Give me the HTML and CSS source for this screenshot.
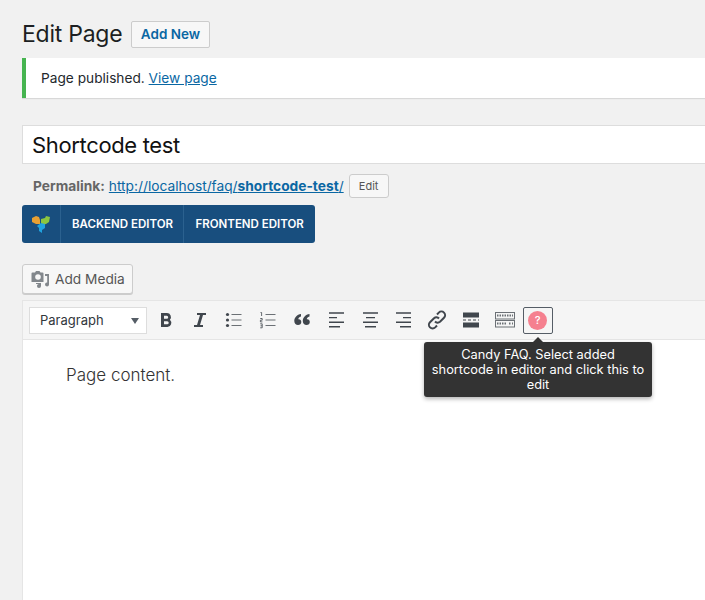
FILE: index.html
```html
<!DOCTYPE html>
<html>
<head>
	<title>Edit Page</title>
	<meta charset="utf-8">
	<link rel="stylesheet" href="styles.css">
</head>
<body>
<div class="wrap">
	<div class="heading">
		<h1>Edit Page</h1>
		<a href="#" class="add-new">Add New</a>
	</div>
	<div class="notice">Page published. <a href="#">View page</a></div>

	<div class="title-box">Shortcode test</div>
	<div class="permalink">
		<strong>Permalink:</strong>
		<a href="#">http://localhost/faq/<b>shortcode-test</b>/</a>
		<span class="btn-small">Edit</span>
	</div>

	<div class="composer">
		<span class="composer-logo">
			<svg width="18" height="19" viewBox="0 0 18 19">
				<path d="M0 3l4-2 3 1 1 3v4H4L0 7z" fill="#e8a032"/>
				<path d="M9 4l4-1 1-2 4 1-1 5-3 2-4 1-1-2z" fill="#8cc63f"/>
				<path d="M5 11l4-3 4 1v4l-3 2v3l-3-2v-3z" fill="#1fa3e0"/>
			</svg>
		</span>
		<span class="composer-btn">BACKEND EDITOR</span>
		<span class="composer-btn">FRONTEND EDITOR</span>
	</div>

	<div class="media-row">
		<a href="#" class="add-media">
			<svg width="18" height="17" viewBox="0 0 18 17">
				<path d="M1.500 1.500H4L5 0h3.500l1 1.500h2a1 1 0 0 1 1 1V11h-12V2.500a1 1 0 0 1 1-1z" fill="#82878c"/>
				<circle cx="7" cy="6" r="2.800" fill="#f7f7f7"/>
				<path d="M14 3h4v10.500a2 2 0 1 1-1.800-2V5H14z" fill="#82878c"/>
				<path d="M5 12h5v3a2 2 0 1 1-1.800-2H5z" fill="#82878c"/>
			</svg>
			Add Media
		</a>
	</div>

	<div class="editor">
		<div class="toolbar">
			<div class="format-select">Paragraph<span class="caret"></span></div>
			<span class="tool">
				<svg width="20" height="20" viewBox="0 0 20 20"><path d="M4 3h6a4 4 0 0 1 2.900 6.700A4.200 4.200 0 0 1 10.500 17H4zm3 2.800v3h2.700a1.500 1.500 0 0 0 0-3zm0 5.400v3h3.200a1.500 1.500 0 0 0 0-3z" fill="#40464d" fill-rule="evenodd"/></svg>
			</span>
			<span class="tool">
				<svg width="20" height="20" viewBox="0 0 20 20"><path d="M6 3h9v2h-3L9 15h3v2H3v-2h3L9 5H6z" fill="#40464d"/></svg>
			</span>
			<span class="tool">
				<svg width="20" height="20" viewBox="0 0 20 20"><g fill="#40464d"><circle cx="3.500" cy="4.500" r="1.600"/><circle cx="3.500" cy="10" r="1.600"/><circle cx="3.500" cy="15.500" r="1.600"/></g><path d="M7.500 4.500h10M7.500 10h10M7.500 15.500h10" stroke="#6b7075" stroke-width="1.100"/></svg>
			</span>
			<span class="tool">
				<svg width="20" height="20" viewBox="0 0 20 20"><path d="M2.500 2.500h1.100v3.500M2.200 8.500h2v1.700H2.400v1.700h2M2.200 13.800h2v4H2.200M2.500 15.800h1.700" stroke="#40464d" stroke-width=".8" fill="none"/><path d="M7.500 4.500h10M7.500 10h10M7.500 15.500h10" stroke="#6b7075" stroke-width="1.100"/></svg>
			</span>
			<span class="tool">
				<svg width="20" height="20" viewBox="0 0 20 20"><path d="M9 4v2.500C7 7 6.300 8.200 6.300 9.200c1.700-.3 3 .9 3 2.700S8 15 6 15s-3.700-1.400-3.700-4C2.300 7.500 5 4.500 9 4zm8.500 0v2.500c-2 .5-2.700 1.700-2.700 2.700 1.700-.3 3 .9 3 2.700S16.500 15 14.500 15s-3.700-1.400-3.700-4c0-3.500 2.700-6.500 6.700-7z" fill="#40464d"/></svg>
			</span>
			<span class="tool">
				<svg width="20" height="20" viewBox="0 0 20 20"><path d="M3 3h15M3 7.600h8M3 12.200h15M3 16.800h11" stroke="#40464d" stroke-width="1.400"/></svg>
			</span>
			<span class="tool">
				<svg width="20" height="20" viewBox="0 0 20 20"><path d="M3 3h15M6 7.600h9M3 12.200h15M5 16.800h11" stroke="#40464d" stroke-width="1.400"/></svg>
			</span>
			<span class="tool">
				<svg width="20" height="20" viewBox="0 0 20 20"><path d="M3 3h15M10 7.600h8M3 12.200h15M7 16.800h11" stroke="#40464d" stroke-width="1.400"/></svg>
			</span>
			<span class="tool">
				<svg width="20" height="20" viewBox="0 0 20 20"><g fill="none" stroke="#40464d" stroke-width="2"><path d="M8 11.500a3.600 3.600 0 0 0 5 .3l4-4a3.600 3.600 0 0 0-5.200-5.200L10 4.500"/><path d="M12 8.500a3.600 3.600 0 0 0-5-.3l-4 4a3.600 3.600 0 0 0 5.200 5.200L10 15.500"/></g></svg>
			</span>
			<span class="tool">
				<svg width="20" height="20" viewBox="0 0 20 20"><path d="M2 2.500h16v5H2zM2 12.500h16v5H2z" fill="#40464d"/><path d="M2 10h3M7 10h3M12 10h3M17 10h1" stroke="#40464d" stroke-width="1.200"/></svg>
			</span>
			<span class="tool">
				<svg width="20" height="20" viewBox="0 0 20 20"><g fill="none" stroke="#6b7075"><rect x=".5" y="2.500" width="19" height="6.500"/><rect x=".5" y="10.500" width="19" height="6.500"/><path d="M2 5.500h16" stroke-dasharray="1.500 1" stroke-width="2"/><path d="M2 13.500h10M14 13.500h2M17 13.500h1" stroke-dasharray="1.500 1" stroke-width="2"/></g></svg>
			</span>
			<span class="tool tool-active"><span class="faq-icon">?</span></span>
		</div>
		<div class="content">Page content.</div>
		<div class="tooltip">Candy FAQ. Select added shortcode in editor and click this to edit</div>
	</div>
</div>
</body>
</html>
```

FILE: styles.css
```css
html, body {
  margin: 0;
  height: 600px;
  overflow: hidden;
}

body {
  background: #f1f1f1;
  color: #23282d;
  font-family: "Inter", "Liberation Sans", sans-serif;
  font-size: 13px;
}

a {
  color: #0073aa;
}

.wrap {
  width: 683px;
  margin-left: 22px;
  padding-top: 19px;
  overflow: hidden;
}

.heading {
  display: flex;
  align-items: center;
  gap: 9px;
  height: 30px;
}

h1 {
  margin: 0;
  font-size: 23px;
  font-weight: 400;
  letter-spacing: -0.25px;
  color: #1c1f22;
}

.add-new {
  padding: 0 8.500px;
  height: 25px;
  line-height: 25px;
  border: 1px solid #ccc;
  border-radius: 2px;
  background: #f7f7f7;
  color: #0a67a3;
  font-size: 13.500px;
  font-weight: 600;
  text-decoration: none;
}

.notice {
  margin-top: 9px;
  height: 40px;
  line-height: 41px;
  padding-left: 15px;
  background: #fff;
  border-left: 4px solid #46b450;
  box-shadow: 0 1px 1px rgba(0, 0, 0, .1);
  font-size: 13.700px;
}

.notice a {
  color: #0a67a3;
}

.title-box {
  margin-top: 27px;
  height: 37px;
  line-height: 39px;
  padding-left: 9px;
  background: #fff;
  border: 1px solid #ddd;
  border-right: 0;
  color: #111;
  font-size: 22px;
  letter-spacing: -0.35px;
}

.permalink {
  display: flex;
  align-items: center;
  height: 24px;
  margin-top: 10px;
  padding-left: 11px;
  color: #666;
  font-size: 13.750px;
  gap: 4px;
}

.permalink a {
  color: #0a67a3;
}

.btn-small {
  height: 22px;
  line-height: 22px;
  width: 38px;
  margin-left: 1px;
  text-align: center;
  border: 1px solid #ccc;
  border-radius: 3px;
  background: #f7f7f7;
  color: #555;
  font-size: 11px;
}

.composer {
  display: flex;
  width: 293px;
  height: 38px;
  margin-top: 7px;
  background: #184e7e;
  border-radius: 3px;
  color: #fff;
  font-size: 11.500px;
  font-weight: 600;
  line-height: 38px;
}

.composer-logo {
  display: flex;
  align-items: center;
  justify-content: center;
  width: 38px;
  flex: none;
}

.composer-btn {
  padding: 0 10.500px 0 11px;
  border-left: 1px solid #2b618f;
  white-space: nowrap;
}

.media-row {
  margin-top: 21px;
}

.add-media {
  display: inline-flex;
  align-items: center;
  gap: 6px;
  width: 101px;
  height: 28px;
  padding-left: 8px;
  border: 1px solid #ccc;
  border-radius: 3px;
  background: #f7f7f7;
  box-shadow: 0 1px 0 #ccc;
  color: #555;
  font-size: 13.700px;
  text-decoration: none;
}

.editor {
  position: relative;
  margin-top: 6px;
  background: #fff;
  border: 1px solid #e5e5e5;
  border-right: 0;
  height: 320px;
}

.toolbar {
  display: flex;
  align-items: center;
  height: 38px;
  padding-left: 6px;
  background: #f5f5f5;
  border-bottom: 1px solid #e5e5e5;
}

.format-select {
  position: relative;
  width: 106px;
  height: 25px;
  line-height: 25px;
  padding-left: 10px;
  background: #fff;
  border: 1px solid #ddd;
  font-size: 13px;
  color: #32373c;
}

.caret {
  position: absolute;
  right: 7px;
  top: 10px;
  border: 4px solid transparent;
  border-top: 6px solid #555d66;
  border-bottom: 0;
}

.tool {
  display: flex;
  align-items: center;
  justify-content: center;
  width: 28px;
  height: 27px;
  margin-left: 5.800px;
}

.tool-active {
  width: 30px;
  margin-left: 4px;
  border: 1px solid #555d66;
  border-radius: 2px;
  box-sizing: border-box;
  background: #f5f5f5;
}

.faq-icon {
  width: 19px;
  height: 19px;
  line-height: 19px;
  border-radius: 50%;
  background: #f5808f;
  color: #fff;
  font-size: 11px;
  font-weight: 500;
  text-align: center;
}

.content {
  padding: 24px 43px;
  color: #333;
  font-family: "Inter", sans-serif;
  font-size: 17px;
  font-weight: 300;
  line-height: 22px;
}

.tooltip {
  position: absolute;
  left: 401px;
  top: 41px;
  width: 216px;
  padding: 5px 6px;
  background: #333;
  border-radius: 3px;
  box-shadow: 0 2px 4px rgba(0, 0, 0, .3);
  color: #fff;
  font-size: 12.800px;
  line-height: 15px;
  text-align: center;
}

.tooltip::before {
  content: "";
  position: absolute;
  left: 109px;
  top: -5px;
  border: 5px solid transparent;
  border-top: 0;
  border-bottom-color: #333;
}
```
